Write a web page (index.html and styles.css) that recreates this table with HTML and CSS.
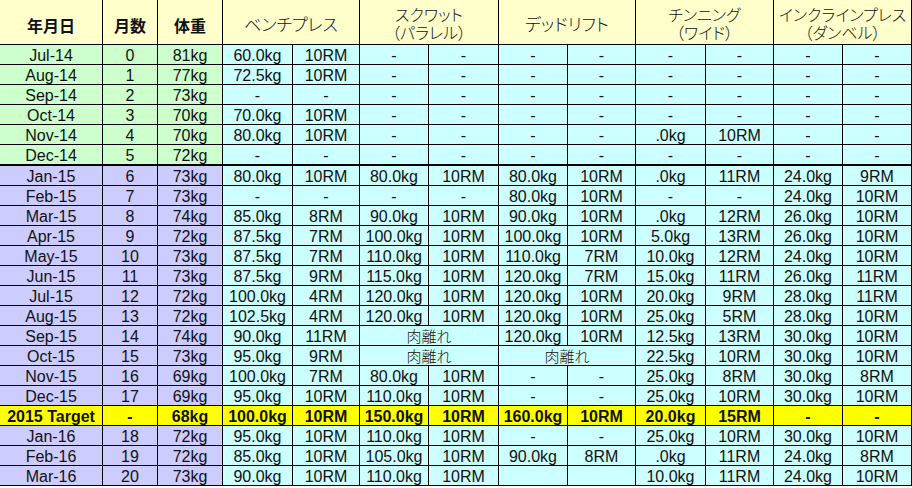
FILE: index.html
```html
<!DOCTYPE html>
<html lang="ja">
<head>
<meta charset="utf-8">
<title>トレーニング記録</title>
<link rel="stylesheet" href="styles.css">
</head>
<body>
<div class="sheet">
  <div class="row head">
    <div class="hb">年月日</div>
    <div class="hb">月数</div>
    <div class="hb">体重</div>
    <div class="hk s2">ベンチプレス</div>
    <div class="hk s2 two"><span>スクワット</span><span>（パラレル）</span></div>
    <div class="hk s2">デッドリフト</div>
    <div class="hk s2 two"><span>チンニング</span><span>（ワイド）</span></div>
    <div class="hk s2 two"><span>インクラインプレス</span><span>（ダンベル）</span></div>
  </div>

  <div class="row y14"><div>Jul-14</div><div>0</div><div>81kg</div><div>60.0kg</div><div>10RM</div><div>-</div><div>-</div><div>-</div><div>-</div><div>-</div><div>-</div><div>-</div><div>-</div></div>
  <div class="row y14"><div>Aug-14</div><div>1</div><div>77kg</div><div>72.5kg</div><div>10RM</div><div>-</div><div>-</div><div>-</div><div>-</div><div>-</div><div>-</div><div>-</div><div>-</div></div>
  <div class="row y14"><div>Sep-14</div><div>2</div><div>73kg</div><div>-</div><div>-</div><div>-</div><div>-</div><div>-</div><div>-</div><div>-</div><div>-</div><div>-</div><div>-</div></div>
  <div class="row y14"><div>Oct-14</div><div>3</div><div>70kg</div><div>70.0kg</div><div>10RM</div><div>-</div><div>-</div><div>-</div><div>-</div><div>-</div><div>-</div><div>-</div><div>-</div></div>
  <div class="row y14"><div>Nov-14</div><div>4</div><div>70kg</div><div>80.0kg</div><div>10RM</div><div>-</div><div>-</div><div>-</div><div>-</div><div>.0kg</div><div>10RM</div><div>-</div><div>-</div></div>
  <div class="row y14"><div>Dec-14</div><div>5</div><div>72kg</div><div>-</div><div>-</div><div>-</div><div>-</div><div>-</div><div>-</div><div>-</div><div>-</div><div>-</div><div>-</div></div>

  <div class="row y15 first"><div>Jan-15</div><div>6</div><div>73kg</div><div>80.0kg</div><div>10RM</div><div>80.0kg</div><div>10RM</div><div>80.0kg</div><div>10RM</div><div>.0kg</div><div>11RM</div><div>24.0kg</div><div>9RM</div></div>
  <div class="row y15"><div>Feb-15</div><div>7</div><div>73kg</div><div>-</div><div>-</div><div>-</div><div>-</div><div>80.0kg</div><div>10RM</div><div>-</div><div>-</div><div>24.0kg</div><div>10RM</div></div>
  <div class="row y15"><div>Mar-15</div><div>8</div><div>74kg</div><div>85.0kg</div><div>8RM</div><div>90.0kg</div><div>10RM</div><div>90.0kg</div><div>10RM</div><div>.0kg</div><div>12RM</div><div>26.0kg</div><div>10RM</div></div>
  <div class="row y15"><div>Apr-15</div><div>9</div><div>72kg</div><div>87.5kg</div><div>7RM</div><div>100.0kg</div><div>10RM</div><div>100.0kg</div><div>10RM</div><div>5.0kg</div><div>13RM</div><div>26.0kg</div><div>10RM</div></div>
  <div class="row y15"><div>May-15</div><div>10</div><div>73kg</div><div>87.5kg</div><div>7RM</div><div>110.0kg</div><div>10RM</div><div>110.0kg</div><div>7RM</div><div>10.0kg</div><div>12RM</div><div>24.0kg</div><div>10RM</div></div>
  <div class="row y15"><div>Jun-15</div><div>11</div><div>73kg</div><div>87.5kg</div><div>9RM</div><div>115.0kg</div><div>10RM</div><div>120.0kg</div><div>7RM</div><div>15.0kg</div><div>11RM</div><div>26.0kg</div><div>11RM</div></div>
  <div class="row y15"><div>Jul-15</div><div>12</div><div>72kg</div><div>100.0kg</div><div>4RM</div><div>120.0kg</div><div>10RM</div><div>120.0kg</div><div>10RM</div><div>20.0kg</div><div>9RM</div><div>28.0kg</div><div>11RM</div></div>
  <div class="row y15"><div>Aug-15</div><div>13</div><div>72kg</div><div>102.5kg</div><div>4RM</div><div>120.0kg</div><div>10RM</div><div>120.0kg</div><div>10RM</div><div>25.0kg</div><div>5RM</div><div>28.0kg</div><div>10RM</div></div>
  <div class="row y15"><div>Sep-15</div><div>14</div><div>74kg</div><div>90.0kg</div><div>11RM</div><div class="s2 jp">肉離れ</div><div>120.0kg</div><div>10RM</div><div>12.5kg</div><div>13RM</div><div>30.0kg</div><div>10RM</div></div>
  <div class="row y15"><div>Oct-15</div><div>15</div><div>73kg</div><div>95.0kg</div><div>9RM</div><div class="s2 jp">肉離れ</div><div class="s2 jp">肉離れ</div><div>22.5kg</div><div>10RM</div><div>30.0kg</div><div>10RM</div></div>
  <div class="row y15"><div>Nov-15</div><div>16</div><div>69kg</div><div>100.0kg</div><div>7RM</div><div>80.0kg</div><div>10RM</div><div>-</div><div>-</div><div>25.0kg</div><div>8RM</div><div>30.0kg</div><div>8RM</div></div>
  <div class="row y15"><div>Dec-15</div><div>17</div><div>69kg</div><div>95.0kg</div><div>10RM</div><div>110.0kg</div><div>10RM</div><div>-</div><div>-</div><div>25.0kg</div><div>10RM</div><div>30.0kg</div><div>10RM</div></div>

  <div class="row target"><div>2015 Target</div><div>-</div><div>68kg</div><div>100.0kg</div><div>10RM</div><div>150.0kg</div><div>10RM</div><div>160.0kg</div><div>10RM</div><div>20.0kg</div><div>15RM</div><div>-</div><div>-</div></div>

  <div class="row y15"><div>Jan-16</div><div>18</div><div>72kg</div><div>95.0kg</div><div>10RM</div><div>110.0kg</div><div>10RM</div><div>-</div><div>-</div><div>25.0kg</div><div>10RM</div><div>30.0kg</div><div>10RM</div></div>
  <div class="row y15"><div>Feb-16</div><div>19</div><div>72kg</div><div>85.0kg</div><div>10RM</div><div>105.0kg</div><div>10RM</div><div>90.0kg</div><div>8RM</div><div>.0kg</div><div>11RM</div><div>24.0kg</div><div>8RM</div></div>
  <div class="row y15"><div>Mar-16</div><div>20</div><div>73kg</div><div>90.0kg</div><div>10RM</div><div>110.0kg</div><div>10RM</div><div></div><div></div><div>10.0kg</div><div>11RM</div><div>24.0kg</div><div>10RM</div></div>
</div>
</body>
</html>
```

FILE: styles.css
```css
html, body {
  margin: 0;
  padding: 0;
  background: #ffffff;
}

body {
  width: 912px;
  height: 488px;
  overflow: hidden;
  font-family: "Liberation Sans", Arial, "Noto Sans CJK JP", sans-serif;
  font-size: 16px;
  color: #111111;
}

.sheet {
  display: grid;
  grid-template-columns: 102px 54px 64px 69px 66px 68px 69px 68px 67px 69px 67px 68px 68px;
  grid-template-rows: 44px repeat(6, 19px) 20px repeat(15, 19px);
  gap: 1px;
  padding: 0 1px 1px 0;
  background: #000000;
  width: max-content;
}

.row {
  display: contents;
}

.row > div {
  box-sizing: border-box;
  text-align: center;
  line-height: 16px;
  padding-top: 3px;
  white-space: nowrap;
  overflow: hidden;
  background: #ccffff;
}

.s2 {
  grid-column: span 2;
}

.row > .jp {
  font-family: "Noto Sans CJK JP", sans-serif;
  font-weight: 300;
  font-size: 15px;
  line-height: 19px;
  padding-top: 0;
  overflow: visible;
}

/* header */
.head > div {
  background: #ffffcc;
  font-family: "Noto Sans CJK JP", sans-serif;
  display: flex;
  flex-direction: column;
  justify-content: center;
  align-items: center;
  padding-top: 4px;
  line-height: 20px;
}

.head > .hb {
  font-weight: 700;
  font-size: 16px;
  padding-top: 6px;
}

.head > .hk {
  font-weight: 300;
  font-size: 17px;
  font-feature-settings: "palt";
  padding-top: 3px;
}

.head > .hk.two {
  padding-top: 2px;
  font-size: 16px;
  line-height: 18px;
}

.head > .hk span {
  display: block;
}

/* date / month / weight columns */
.y14 > div:nth-child(-n+3) {
  background: #ccffcc;
}

.y15 > div:nth-child(-n+3) {
  background: #ccccff;
}

.first > div {
  border-top: 1px solid #000000;
}

/* target row */
.target > div {
  background: #ffff00;
  font-weight: 700;
}
```
